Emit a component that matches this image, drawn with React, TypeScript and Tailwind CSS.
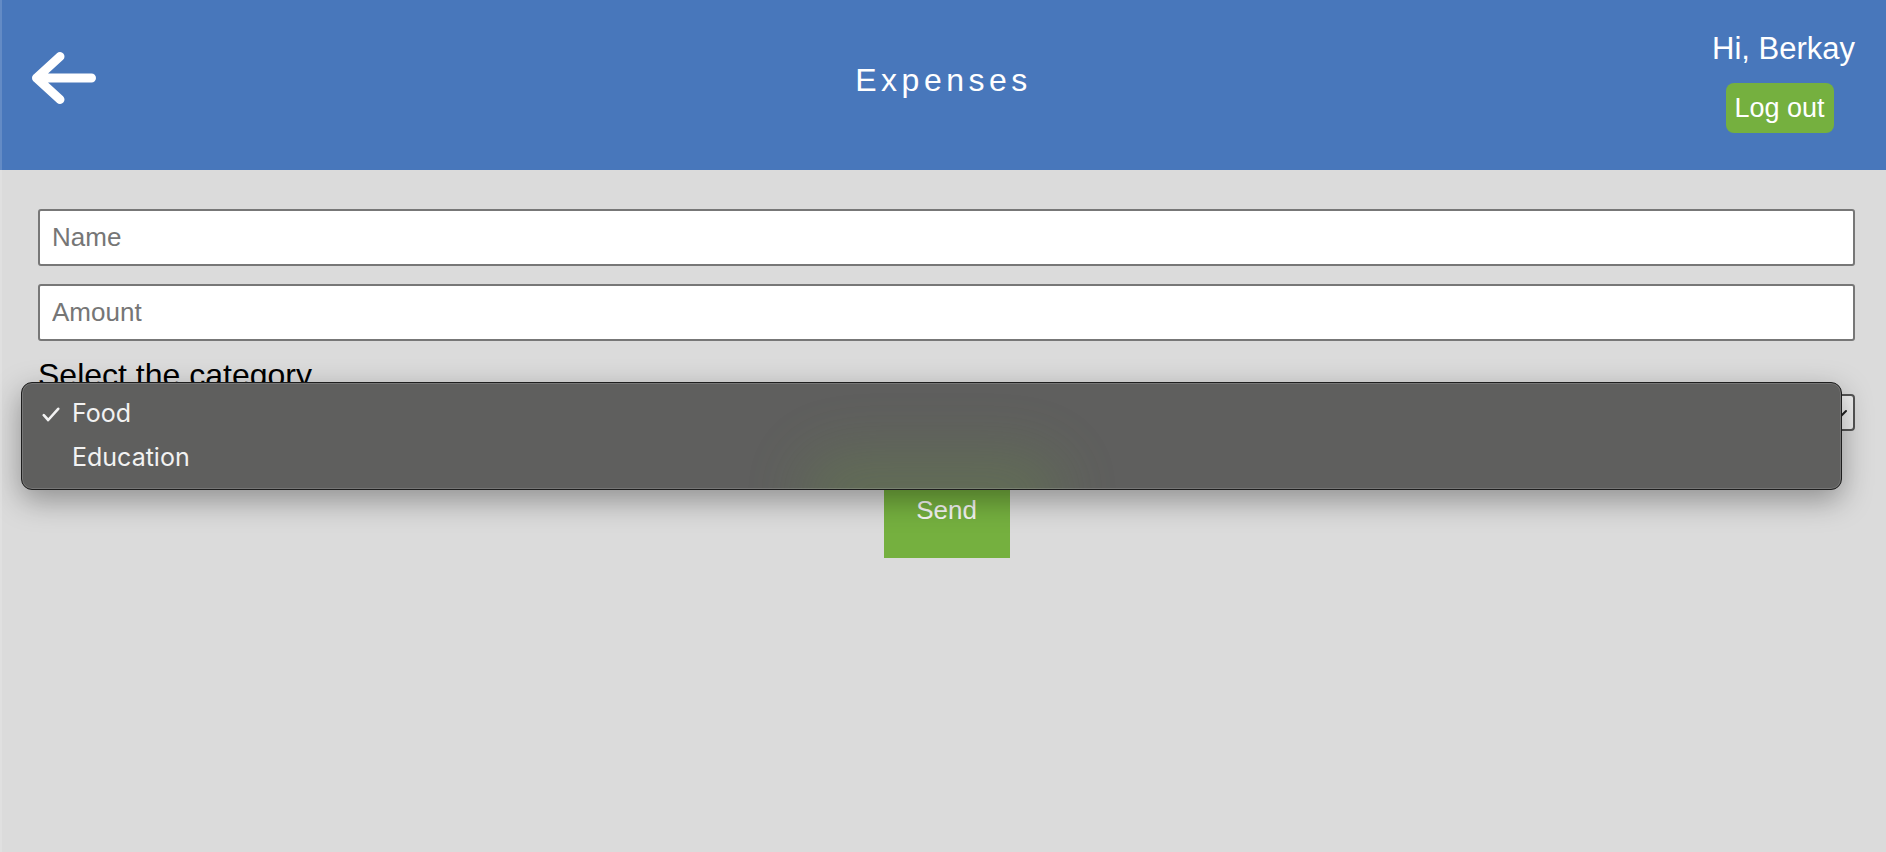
import React from "react";

export default function App() {
  return (
    <div className="relative h-[852px] w-full overflow-hidden bg-[#dbdbdb] font-['Liberation_Sans',Arial,sans-serif]">
      <header className="grid h-[170px] grid-cols-[1fr_auto_1fr] items-start bg-[#4877bb] pl-[28px] pr-[31px]">
        <div className="mt-[48px]">
          <svg width="72" height="60" viewBox="0 0 72 60" fill="none">
            <path
              d="M63.5 30 H8.5 M32 8.5 L8.5 30 L32 51.5"
              stroke="#ffffff"
              strokeWidth="9"
              strokeLinecap="round"
              strokeLinejoin="round"
            />
          </svg>
        </div>
        <h1 className="mt-[64px] pl-[4px] text-[32px] leading-none font-normal tracking-[4.5px] text-white">
          Expenses
        </h1>
        <div className="flex justify-end">
          <div className="mt-[33px] flex flex-col items-center">
            <div className="text-[31px] leading-none text-white">Hi, Berkay</div>
            <button className="mt-[19px] mr-[8px] flex h-[50px] w-[108px] items-center justify-center rounded-[8px] bg-[#75b03f] text-[27px] leading-none text-white">
              Log out
            </button>
          </div>
        </div>
      </header>

      <main className="flex flex-col pt-[39px] pl-[38px] pr-[31px]">
        <input
          placeholder="Name"
          className="h-[57px] w-full rounded-[3px] border-2 border-[#777777] bg-white px-[12px] text-[26px] text-black outline-none placeholder:text-[#767676]"
        />
        <input
          placeholder="Amount"
          className="mt-[18px] h-[57px] w-full rounded-[3px] border-2 border-[#777777] bg-white px-[12px] text-[26px] text-black outline-none placeholder:text-[#767676]"
        />
        <label className="mt-[18px] text-[32px] leading-none text-black">Select the category</label>
        <div className="mt-[3px] flex h-[37px] w-full items-center justify-between rounded-[4px] border-2 border-[#555555] bg-[#f0f0f0] pl-[10px] pr-[6px] text-[22px] text-black">
          <span>Food</span>
          <svg width="12" height="10" viewBox="0 0 12 10" fill="none">
            <path d="M1 3 L6 8 L11 3" stroke="#222" strokeWidth="2" strokeLinecap="round" />
          </svg>
        </div>
        <div className="mt-[32px] flex justify-center">
          <button className="h-[95px] w-[126px] bg-[#75b03f] text-[26px] text-[#f5f5f5]">Send</button>
        </div>
      </main>

      {/* native select popup */}
      <div className="absolute left-[21px] top-[382px] h-[108px] w-[1821px] overflow-hidden rounded-[11px] border border-[#1e1e1e] bg-[#5f5f5e] shadow-[0_10px_30px_rgba(0,0,0,0.35)]">
        <div className="absolute left-1/2 top-[70px] h-[80px] w-[260px] -translate-x-1/2 rounded-full bg-[#6b9a3f] opacity-25 blur-[30px]" />
        <div className="absolute inset-0 rounded-[10px] border border-white/15" />
        <div className="relative flex flex-col pt-[9px] font-['Inter','Liberation_Sans',sans-serif] text-[25px] text-[#f2f2f2]">
          <div className="flex h-[44px] items-center">
            <span className="flex w-[50px] pl-[20px]">
              <svg width="18" height="15" viewBox="0 0 18 15" fill="none">
                <path
                  d="M1.8 8.2 L6.2 13 L16.2 1.8"
                  stroke="#f2f2f2"
                  strokeWidth="2.6"
                  strokeLinecap="round"
                  strokeLinejoin="round"
                />
              </svg>
            </span>
            <span>Food</span>
          </div>
          <div className="flex h-[44px] items-center">
            <span className="w-[50px]" />
            <span>Education</span>
          </div>
        </div>
      </div>

      <div className="absolute left-0 top-0 h-full w-[2px] bg-white/15" />
    </div>
  );
}
